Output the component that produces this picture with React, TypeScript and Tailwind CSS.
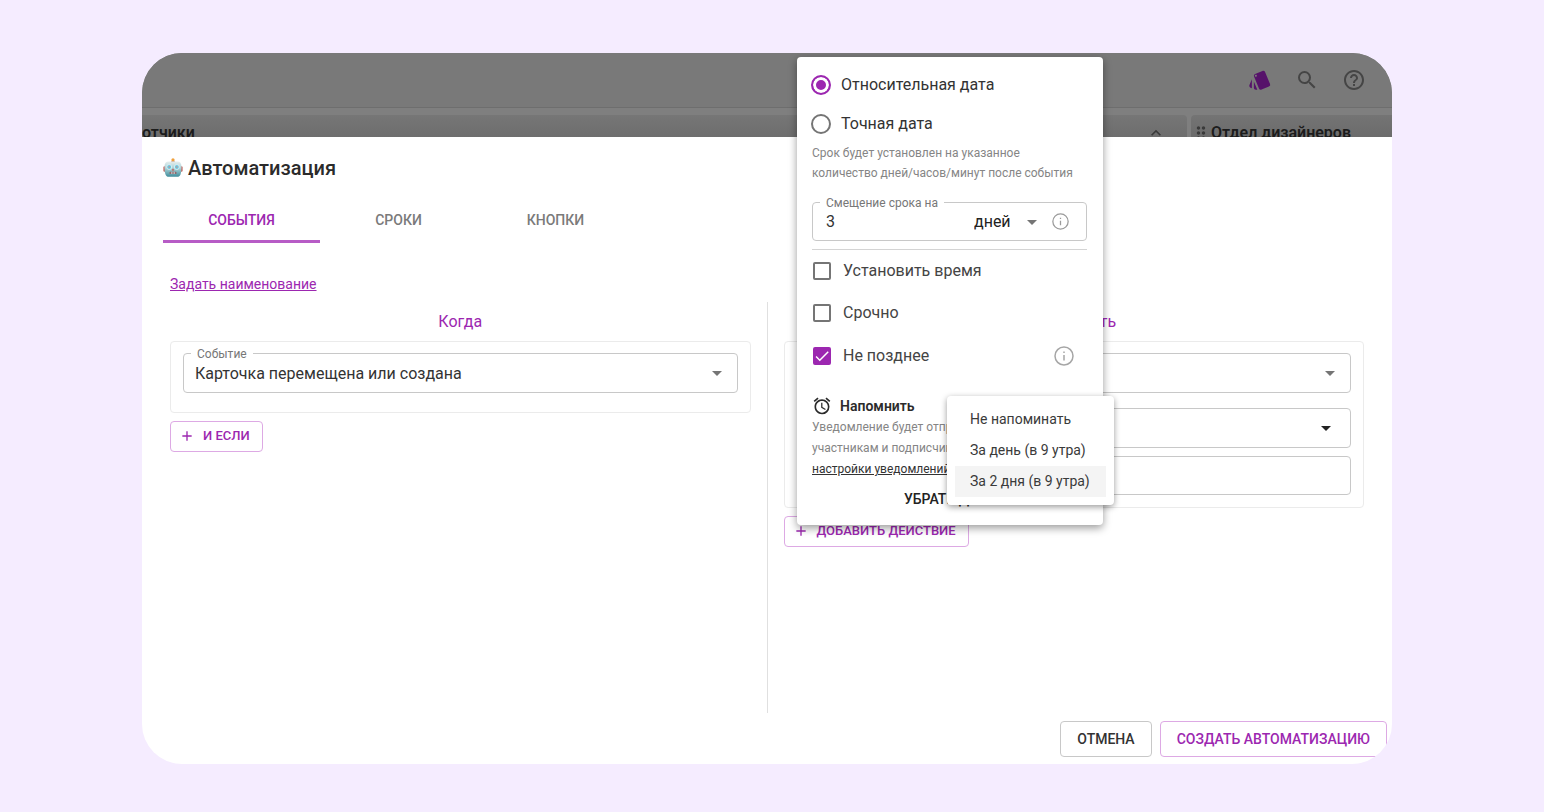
import { useState } from "react";
import type { ReactNode } from "react";
import {
  MdAdd,
  MdAlarm,
  MdArrowDropDown,
  MdCheck,
  MdDragIndicator,
  MdHelpOutline,
  MdKeyboardArrowUp,
  MdSearch,
  MdStyle,
} from "react-icons/md";

function InfoIcon({ className }: { className: string }) {
  return (
    <svg viewBox="0 0 20 20" fill="none" stroke="currentColor" strokeWidth="1.5" className={className} aria-hidden="true">
      <circle cx="10" cy="10" r="9" />
      <path d="M10 9v5.5M10 5.5v1.6" />
    </svg>
  );
}

function RobotIcon() {
  return (
    <svg viewBox="0 0 20 20" className="h-5 w-5 shrink-0" aria-hidden="true">
      <defs>
        <linearGradient id="robot-head" x1="0" y1="0" x2="0" y2="1">
          <stop offset="0" stopColor="#e6eeee" />
          <stop offset="0.45" stopColor="#a9d0d5" />
          <stop offset="1" stopColor="#3f8c9b" />
        </linearGradient>
      </defs>
      <rect x="0.4" y="8.2" width="2.4" height="5.6" rx="1.2" fill="#c0605a" />
      <rect x="17.2" y="8.2" width="2.4" height="5.6" rx="1.2" fill="#c0605a" />
      <path d="M8.3 4.2h3.4v-1.4h-3.4z" fill="#b08a80" />
      <circle cx="10" cy="1.8" r="1.6" fill="#f0a03c" />
      <path d="M5.6 3.6h8.800c2.700 0 4.100 1.800 4.100 5.200 0 2.800-.2 5.400-1 7.600-.6 1.700-1.700 2.400-3.300 2.400H5.800c-1.600 0-2.700-.7-3.300-2.400-.8-2.200-1-4.800-1-7.600 0-3.400 1.400-5.200 4.100-5.200z" fill="url(#robot-head)" />
      <circle cx="6.2" cy="9" r="2.5" fill="#6fc9df" stroke="#e9f5f7" strokeWidth="0.8" />
      <circle cx="13.8" cy="9" r="2.5" fill="#6fc9df" stroke="#e9f5f7" strokeWidth="0.8" />
      <circle cx="6.2" cy="9" r="0.8" fill="#d78a86" />
      <circle cx="13.8" cy="9" r="0.8" fill="#d78a86" />
      <path d="M10 10.3l1.2 2.2H8.8z" fill="#cf4b42" />
      <rect x="6.6" y="13.8" width="6.8" height="2.2" rx="0.6" fill="#8f5f62" />
      <path d="M8.4 13.8v2.2M10 13.8v2.2M11.600 13.8v2.2" stroke="#cfe3e6" strokeWidth="0.7" />
    </svg>
  );
}

function SelectField({ id, label, name, value, dark }: { id: string; label?: string; name: string; value: string; dark?: boolean }) {
  return (
    <div className="relative flex h-10 items-center rounded border border-[#c8c8c8]">
      {label && (
        <label htmlFor={id} className="absolute -top-2.5 left-[7px] bg-white px-1.5 text-xs leading-5 text-[#777777]">
          {label}
        </label>
      )}
      <select id={id} aria-label={label ? undefined : name} className="h-full w-full appearance-none bg-transparent pt-0.5 pl-[11px] text-base text-[#333333] outline-none">
        <option>{value}</option>
      </select>
      <MdArrowDropDown
        className={dark ? "pointer-events-none absolute right-3 h-6 w-6 text-[#222222]" : "pointer-events-none absolute right-2 h-6 w-6 text-[#757575]"}
        aria-hidden="true"
      />
    </div>
  );
}

function OutlineButton({ children }: { children: ReactNode }) {
  return (
    <button type="button" className="mt-2 flex h-[31px] w-fit items-center gap-2 rounded border border-[#dda9e4] pr-3 pb-px pl-2 text-[13px] font-medium text-[#9c27b0]">
      <MdAdd className="h-4 w-4" aria-hidden="true" />
      {children}
    </button>
  );
}

function RadioRow({ label, checked, onChange }: { label: string; checked: boolean; onChange: () => void }) {
  return (
    <label className="flex h-[39px] items-center gap-2.5 text-base text-[#333333]">
      <input
        type="radio"
        name="date-kind"
        checked={checked}
        onChange={onChange}
        className="h-5 w-5 appearance-none rounded-full border-2 border-[#757575] checked:border-[#9c27b0] checked:bg-[#9c27b0] checked:shadow-[inset_0_0_0_3px_white]"
      />
      {label}
    </label>
  );
}

function CheckRow({ label, defaultChecked, className }: { label: string; defaultChecked?: boolean; className: string }) {
  return (
    <label className={className}>
      <span className="grid h-[18px] w-[18px] shrink-0 place-items-center">
        <input
          type="checkbox"
          defaultChecked={defaultChecked}
          className="peer col-start-1 row-start-1 h-[18px] w-[18px] appearance-none rounded-xs border-2 border-[#757575] checked:border-[#9c27b0] checked:bg-[#9c27b0]"
        />
        <MdCheck className="pointer-events-none col-start-1 row-start-1 hidden h-[18px] w-[18px] text-white peer-checked:block" aria-hidden="true" />
      </span>
      {label}
    </label>
  );
}

function Backdrop() {
  return (
    <header className="flex h-[84px] flex-col overflow-hidden bg-[#7f7f7f]">
      <div className="flex h-[55px] shrink-0 items-center justify-end gap-[23px] border-b border-[#6e6e6e] bg-[#797979] pr-[26px] text-[#454545]">
        <button type="button" aria-label="Карточки" className="text-[#56126a]">
          <MdStyle className="h-6 w-6" />
        </button>
        <button type="button" aria-label="Поиск">
          <MdSearch className="h-6 w-6" />
        </button>
        <button type="button" aria-label="Справка">
          <MdHelpOutline className="h-6 w-6" />
        </button>
      </div>
      <div className="mt-[7px] flex h-9 shrink-0 gap-1">
        <div className="flex flex-1 items-center justify-between rounded-tr bg-linear-to-b from-[#767676] to-[#686868] pr-[21px] font-semibold text-[#1c1c1c]">
          отчики
          <MdKeyboardArrowUp className="h-5 w-5 text-[#3a3a3a]" aria-hidden="true" />
        </div>
        <div className="flex w-[201px] items-center rounded-tl bg-linear-to-b from-[#747474] to-[#666666] font-semibold text-[#1c1c1c]">
          <MdDragIndicator className="h-5 w-5 text-[#3a3a3a]" aria-hidden="true" />
          Отдел дизайнеров
        </div>
      </div>
    </header>
  );
}

const reminders = ["Не напоминать", "За день (в 9 утра)", "За 2 дня (в 9 утра)"];

function DatePopup() {
  const [kind, setKind] = useState("relative");
  const [reminder, setReminder] = useState(2);
  return (
    <section
      aria-label="Срок"
      className="absolute top-1 left-[655px] w-[306px] rounded bg-white pt-2 pr-4 pb-2 pl-[15px] shadow-[0_3px_8px_rgba(0,0,0,0.4)]"
    >
      <div className="-ml-px">
        <RadioRow label="Относительная дата" checked={kind === "relative"} onChange={() => setKind("relative")} />
        <RadioRow label="Точная дата" checked={kind === "exact"} onChange={() => setKind("exact")} />
      </div>
      <p className="text-xs leading-5 text-[#858585]">
        Срок будет установлен на указанное
        <br />
        количество дней/часов/минут после события
      </p>
      <div className="relative mt-[19px] flex h-[39px] items-center rounded border border-[#c8c8c8] pr-[17px] pl-[13px]">
        <label htmlFor="shift" className="absolute -top-2.5 left-[7px] bg-white px-1.5 text-xs leading-5 text-[#777777]">
          Смещение срока на
        </label>
        <input id="shift" type="text" defaultValue="3" className="w-0 flex-1 text-base text-[#333333] outline-none" />
        <select aria-label="Единица времени" className="w-[46px] appearance-none text-base text-[#222222] outline-none">
          <option>дней</option>
        </select>
        <MdArrowDropDown className="h-6 w-6 text-[#757575]" aria-hidden="true" />
        <InfoIcon className="ml-2 h-[17px] w-[17px] text-[#9b9b9b]" />
      </div>
      <hr className="mt-2 border-[#d4d4d4]" />
      <CheckRow label="Установить время" className="flex h-[42px] items-center gap-3 pl-px text-base text-[#444444]" />
      <CheckRow label="Срочно" className="flex h-[42px] items-center gap-3 pl-px text-base text-[#444444]" />
      <div className="flex h-11 items-center justify-between pr-[13px]">
        <CheckRow label="Не позднее" defaultChecked className="flex items-center gap-3 pl-px text-base text-[#444444]" />
        <InfoIcon className="h-5 w-5 text-[#a6a6a6]" />
      </div>
      <h3 className="mt-[18px] flex h-5 items-center gap-2 text-sm font-semibold text-[#2b2b2b]">
        <MdAlarm className="h-5 w-5" aria-hidden="true" />
        Напомнить
      </h3>
      <p className="mt-px text-xs leading-[21px] text-[#858585]">
        Уведомление будет отправлено
        <br />
        участникам и подписчикам
        <br />
        <a href="#notifications" className="text-[#333333] underline">
          настройки уведомлений
        </a>
      </p>
      <button type="button" className="mx-auto mt-px block h-9 text-sm font-medium text-[#222222]">
        УБРАТЬ ДАТУ
      </button>
      <div role="menu" className="absolute top-[339px] left-[150px] w-[167px] rounded bg-white p-2 shadow-[0_2px_6px_rgba(0,0,0,0.4)]">
        {reminders.map((text, i) => (
          <button
            key={text}
            type="button"
            role="menuitem"
            onClick={() => setReminder(i)}
            className={
              i === reminder
                ? "block h-[31px] w-full bg-[#f4f4f4] pb-0.5 pl-[15px] text-left text-sm whitespace-nowrap text-[#3a3a3a]"
                : "block h-[31px] w-full pb-0.5 pl-[15px] text-left text-sm whitespace-nowrap text-[#3a3a3a]"
            }
          >
            {text}
          </button>
        ))}
      </div>
    </section>
  );
}

const tabs = ["СОБЫТИЯ", "СРОКИ", "КНОПКИ"];

export default function App() {
  const [tab, setTab] = useState(0);
  return (
    <main className="flex min-h-screen flex-col bg-[#f5ecff] pt-[53px] pr-[152px] pb-12 pl-[142px] font-[Roboto,sans-serif]">
      <div className="relative flex flex-1 flex-col overflow-hidden rounded-[40px] bg-white">
        <Backdrop />
        <section aria-label="Автоматизация" className="flex flex-1 flex-col">
          <h1 className="flex h-[62px] items-center gap-[5px] pl-[21px] text-xl font-medium text-[#2b2b2b]">
            <RobotIcon />
            Автоматизация
          </h1>
          <div role="tablist" className="flex h-11 pl-[21px]">
            {tabs.map((text, i) => (
              <button
                key={text}
                type="button"
                role="tab"
                aria-selected={i === tab}
                onClick={() => setTab(i)}
                className={
                  i === tab
                    ? "w-[157px] border-b-3 border-[#b75cc6] text-sm font-medium text-[#9c27b0]"
                    : "w-[157px] border-b-3 border-transparent text-sm font-medium text-[#7a7a7a]"
                }
              >
                {text}
              </button>
            ))}
          </div>
          <a href="#name" className="mt-[31px] ml-7 w-fit text-sm leading-5 text-[#9c27b0] underline">
            Задать наименование
          </a>
          <div className="mt-2 mr-7 ml-7 flex flex-1">
            <div className="flex-1 pr-4">
              <h2 className="h-[39px] text-center text-base leading-[39px] text-[#9c27b0]">Когда</h2>
              <div className="rounded border border-[#ebebeb] px-3 pt-[11px] pb-[19px]">
                <SelectField id="event" label="Событие" name="Событие" value="Карточка перемещена или создана" />
              </div>
              <OutlineButton>И ЕСЛИ</OutlineButton>
            </div>
            <div className="flex-1 border-l border-[#e0e0e0] pl-4">
              <h2 className="h-[39px] text-center text-base leading-[39px] text-[#9c27b0]">Выполнить</h2>
              <div className="rounded border border-[#ebebeb] px-3 pt-[11px] pb-3">
                <SelectField id="action" name="Действие" value="" />
                <div className="mt-[15px]">
                  <SelectField id="due" name="Срок" value="" dark />
                </div>
                <input aria-label="Комментарий" type="text" className="mt-2 block h-[39px] w-full rounded border border-[#c8c8c8] px-3 text-base outline-none" />
              </div>
              <OutlineButton>ДОБАВИТЬ ДЕЙСТВИЕ</OutlineButton>
            </div>
          </div>
          <footer className="flex justify-end gap-2 pt-2 pr-[5px] pb-[7px]">
            <button type="button" className="h-9 rounded border border-[#c8c8c8] px-4 text-sm font-medium text-[#333333]">
              ОТМЕНА
            </button>
            <button type="button" className="h-9 rounded border border-[#dda9e4] px-4 text-sm font-medium text-[#9c27b0]">
              СОЗДАТЬ АВТОМАТИЗАЦИЮ
            </button>
          </footer>
        </section>
        <DatePopup />
      </div>
    </main>
  );
}
